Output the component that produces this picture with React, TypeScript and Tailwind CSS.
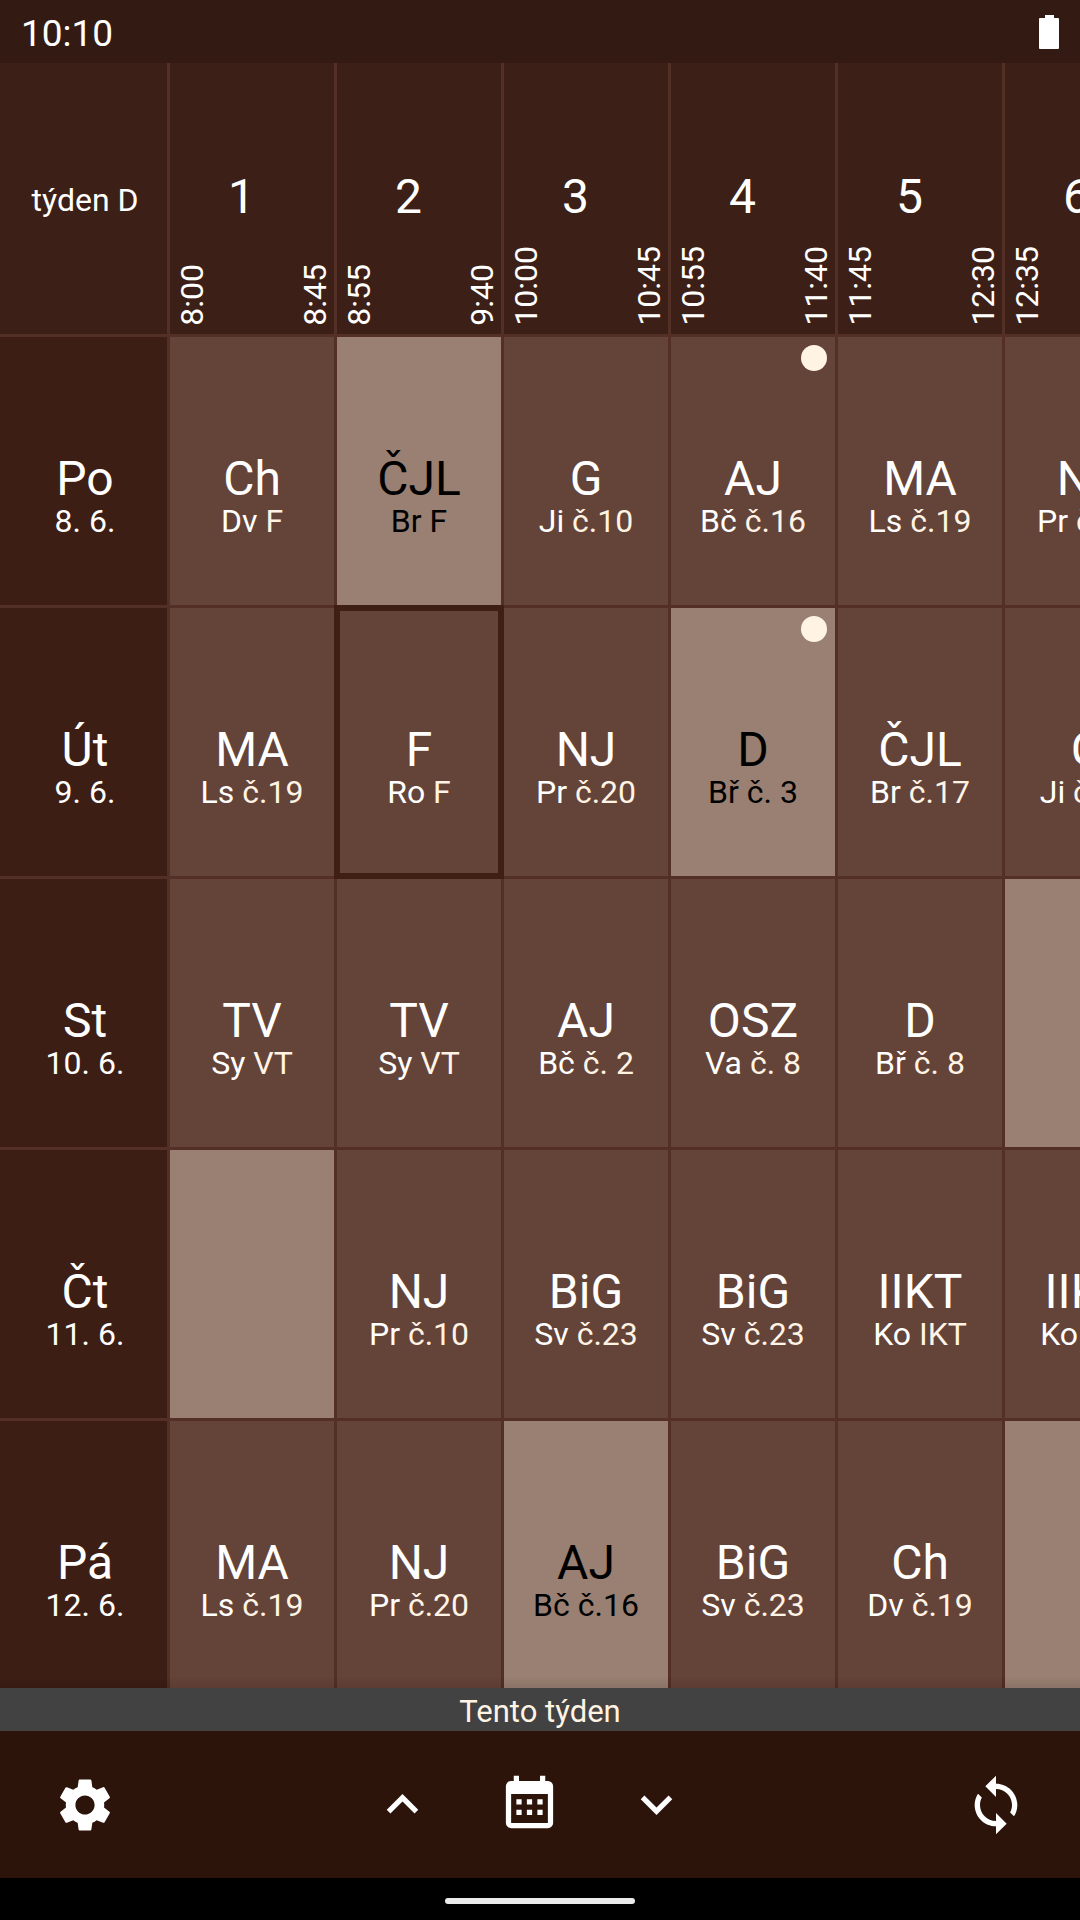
import React from "react";
import { MdKeyboardArrowDown, MdKeyboardArrowUp, MdSettings, MdSync } from "react-icons/md";

type Lesson = {
  subject: string;
  teacher: string;
  room: string;
  changed?: boolean;
  current?: boolean;
  homework?: boolean;
};

type Day = { name: string; date: string; lessons: (Lesson | null)[] };

const periods = [
  { number: 1, from: "8:00", to: "8:45" },
  { number: 2, from: "8:55", to: "9:40" },
  { number: 3, from: "10:00", to: "10:45" },
  { number: 4, from: "10:55", to: "11:40" },
  { number: 5, from: "11:45", to: "12:30" },
  { number: 6, from: "12:35", to: "13:20" },
];

const days: Day[] = [
  {
    name: "Po",
    date: "8. 6.",
    lessons: [
      { subject: "Ch", teacher: "Dv", room: "F" },
      { subject: "ČJL", teacher: "Br", room: "F", changed: true },
      { subject: "G", teacher: "Ji", room: "č.10" },
      { subject: "AJ", teacher: "Bč", room: "č.16", homework: true },
      { subject: "MA", teacher: "Ls", room: "č.19" },
      { subject: "NJ", teacher: "Pr", room: "č.20" },
    ],
  },
  {
    name: "Út",
    date: "9. 6.",
    lessons: [
      { subject: "MA", teacher: "Ls", room: "č.19" },
      { subject: "F", teacher: "Ro", room: "F", current: true },
      { subject: "NJ", teacher: "Pr", room: "č.20" },
      { subject: "D", teacher: "Bř", room: "č. 3", changed: true, homework: true },
      { subject: "ČJL", teacher: "Br", room: "č.17" },
      { subject: "G", teacher: "Ji", room: "č.10" },
    ],
  },
  {
    name: "St",
    date: "10. 6.",
    lessons: [
      { subject: "TV", teacher: "Sy", room: "VT" },
      { subject: "TV", teacher: "Sy", room: "VT" },
      { subject: "AJ", teacher: "Bč", room: "č. 2" },
      { subject: "OSZ", teacher: "Va", room: "č. 8" },
      { subject: "D", teacher: "Bř", room: "č. 8" },
      null,
    ],
  },
  {
    name: "Čt",
    date: "11. 6.",
    lessons: [
      null,
      { subject: "NJ", teacher: "Pr", room: "č.10" },
      { subject: "BiG", teacher: "Sv", room: "č.23" },
      { subject: "BiG", teacher: "Sv", room: "č.23" },
      { subject: "IIKT", teacher: "Ko", room: "IKT" },
      { subject: "IIKT", teacher: "Ko", room: "IKT" },
    ],
  },
  {
    name: "Pá",
    date: "12. 6.",
    lessons: [
      { subject: "MA", teacher: "Ls", room: "č.19" },
      { subject: "NJ", teacher: "Pr", room: "č.20" },
      { subject: "AJ", teacher: "Bč", room: "č.16", changed: true },
      { subject: "BiG", teacher: "Sv", room: "č.23" },
      { subject: "Ch", teacher: "Dv", room: "č.19" },
      null,
    ],
  },
];

function StatusBar() {
  return (
    <header className="flex h-[63px] shrink-0 items-center justify-between bg-[#331a12] px-[21px]">
      <time className="pt-1 text-[37px] leading-[44px]">10:10</time>
      <svg viewBox="0 0 20 34" className="h-[34px] w-5 fill-white" role="img" aria-label="Baterie">
        <path d="M6 0h9v3h4a1 1 0 0 1 1 1v29a1 1 0 0 1-1 1H1a1 1 0 0 1-1-1V4a1 1 0 0 1 1-1h5z" />
      </svg>
    </header>
  );
}

function PeriodHeader({ number, from, to }: { number: number; from: string; to: string }) {
  return (
    <th scope="col" className="border-l-3 border-[#532f25] bg-[#3c1f16] p-0 font-normal">
      <div className="flex h-[271px] items-end justify-between pb-2 pl-[3px] pt-1">
        <time className="rotate-180 text-[32px] leading-[38px] [writing-mode:vertical-rl]">{from}</time>
        <span className="self-center pr-6 text-5xl leading-[56px]">{number}</span>
        <time className="rotate-180 text-[32px] leading-[38px] [writing-mode:vertical-rl]">{to}</time>
      </div>
    </th>
  );
}

function LessonCell({ lesson }: { lesson: Lesson | null }) {
  if (!lesson) {
    return <td className="h-[271px] border-l-3 border-t-3 border-[#532f25] bg-[#998072]" />;
  }
  const tone = lesson.changed ? "bg-[#998072] text-black" : "bg-[#644338] text-white";
  const anchor = lesson.current || lesson.homework ? "relative" : "";
  return (
    <td
      className={`h-[271px] border-l-3 border-t-3 border-[#532f25] p-0 pt-12 text-center align-middle whitespace-nowrap ${tone} ${anchor}`}
    >
      <div className="text-5xl leading-[52px]">{lesson.subject}</div>
      <div className="text-[32px] leading-8">
        {lesson.teacher} <span className={lesson.changed ? "" : "text-[#fff3e4]"}>{lesson.room}</span>
      </div>
      {lesson.homework && <span className="absolute right-2 top-2 size-[26px] rounded-full bg-[#fff3e4]" />}
      {lesson.current && <span className="absolute -inset-[3px] border-6 border-[#3f1e14]" />}
    </td>
  );
}

function Timetable() {
  return (
    <main className="relative min-h-0 flex-1 overflow-hidden">
      <div className="h-full overflow-auto [scrollbar-width:none]">
        <table className="w-[1169px] table-fixed border-separate border-spacing-0">
          <thead>
            <tr>
              <th scope="col" className="bg-[#3c1f16] p-0 pl-[3px] pt-0.5 text-[32px] font-normal leading-[38px]">
                týden D
              </th>
              {periods.map((p) => (
                <PeriodHeader key={p.number} {...p} />
              ))}
            </tr>
          </thead>
          <tbody>
            {days.map((day) => (
              <tr key={day.name}>
                <th
                  scope="row"
                  className="h-[271px] border-t-3 border-[#532f25] bg-[#3c1e15] p-0 pl-[3px] pt-12 align-middle font-normal"
                >
                  <div className="text-5xl leading-[52px]">{day.name}</div>
                  <div className="text-[32px] leading-8">{day.date}</div>
                </th>
                {day.lessons.map((lesson, i) => (
                  <LessonCell key={i} lesson={lesson} />
                ))}
              </tr>
            ))}
          </tbody>
        </table>
      </div>
      <div className="pointer-events-none absolute inset-x-0 bottom-0 h-3 bg-linear-to-t from-black/10 to-transparent" />
    </main>
  );
}

function CalendarIcon() {
  return (
    <svg viewBox="0 0 24 24" className="size-[63px] fill-white" aria-hidden="true">
      <path
        fillRule="evenodd"
        d="M6 1h2v2h8V1h2v2h1a2 2 0 0 1 2 2v14a2 2 0 0 1-2 2H5a2 2 0 0 1-2-2V5a2 2 0 0 1 2-2h1zM5 8v11h14V8zM7 10h2v2H7zM11 10h2v2h-2zM15 10h2v2h-2zM7 14h2v2H7zM11 14h2v2h-2zM15 14h2v2h-2z"
      />
    </svg>
  );
}

function ToolButton({ label, children }: { label: string; children: React.ReactNode }) {
  return (
    <button type="button" aria-label={label} className="flex h-full w-[127px] items-center justify-center">
      {children}
    </button>
  );
}

function Toolbar() {
  return (
    <nav className="flex h-[147px] shrink-0 items-center justify-between bg-[#2d140b] px-[21px]">
      <ToolButton label="Nastavení">
        <MdSettings className="size-16" />
      </ToolButton>
      <div className="mr-[21px] flex h-full">
        <ToolButton label="Předchozí týden">
          <MdKeyboardArrowUp className="size-[63px]" />
        </ToolButton>
        <ToolButton label="Aktuální týden">
          <CalendarIcon />
        </ToolButton>
        <ToolButton label="Následující týden">
          <MdKeyboardArrowDown className="size-[63px]" />
        </ToolButton>
      </div>
      <ToolButton label="Obnovit">
        <MdSync className="size-16" />
      </ToolButton>
    </nav>
  );
}

export default function App() {
  return (
    <div className="flex h-screen flex-col overflow-hidden bg-[#3c1f16] font-[Roboto,sans-serif] text-white">
      <StatusBar />
      <Timetable />
      <p className="h-[43px] shrink-0 bg-[#424242] pt-1 text-center text-[31px] leading-[39px] text-[#fff3e4]">
        Tento týden
      </p>
      <Toolbar />
      <div className="flex h-[42px] shrink-0 items-center justify-center bg-black pt-1">
        <div className="h-1.5 w-[190px] rounded-full bg-[#ebebeb]" />
      </div>
    </div>
  );
}
